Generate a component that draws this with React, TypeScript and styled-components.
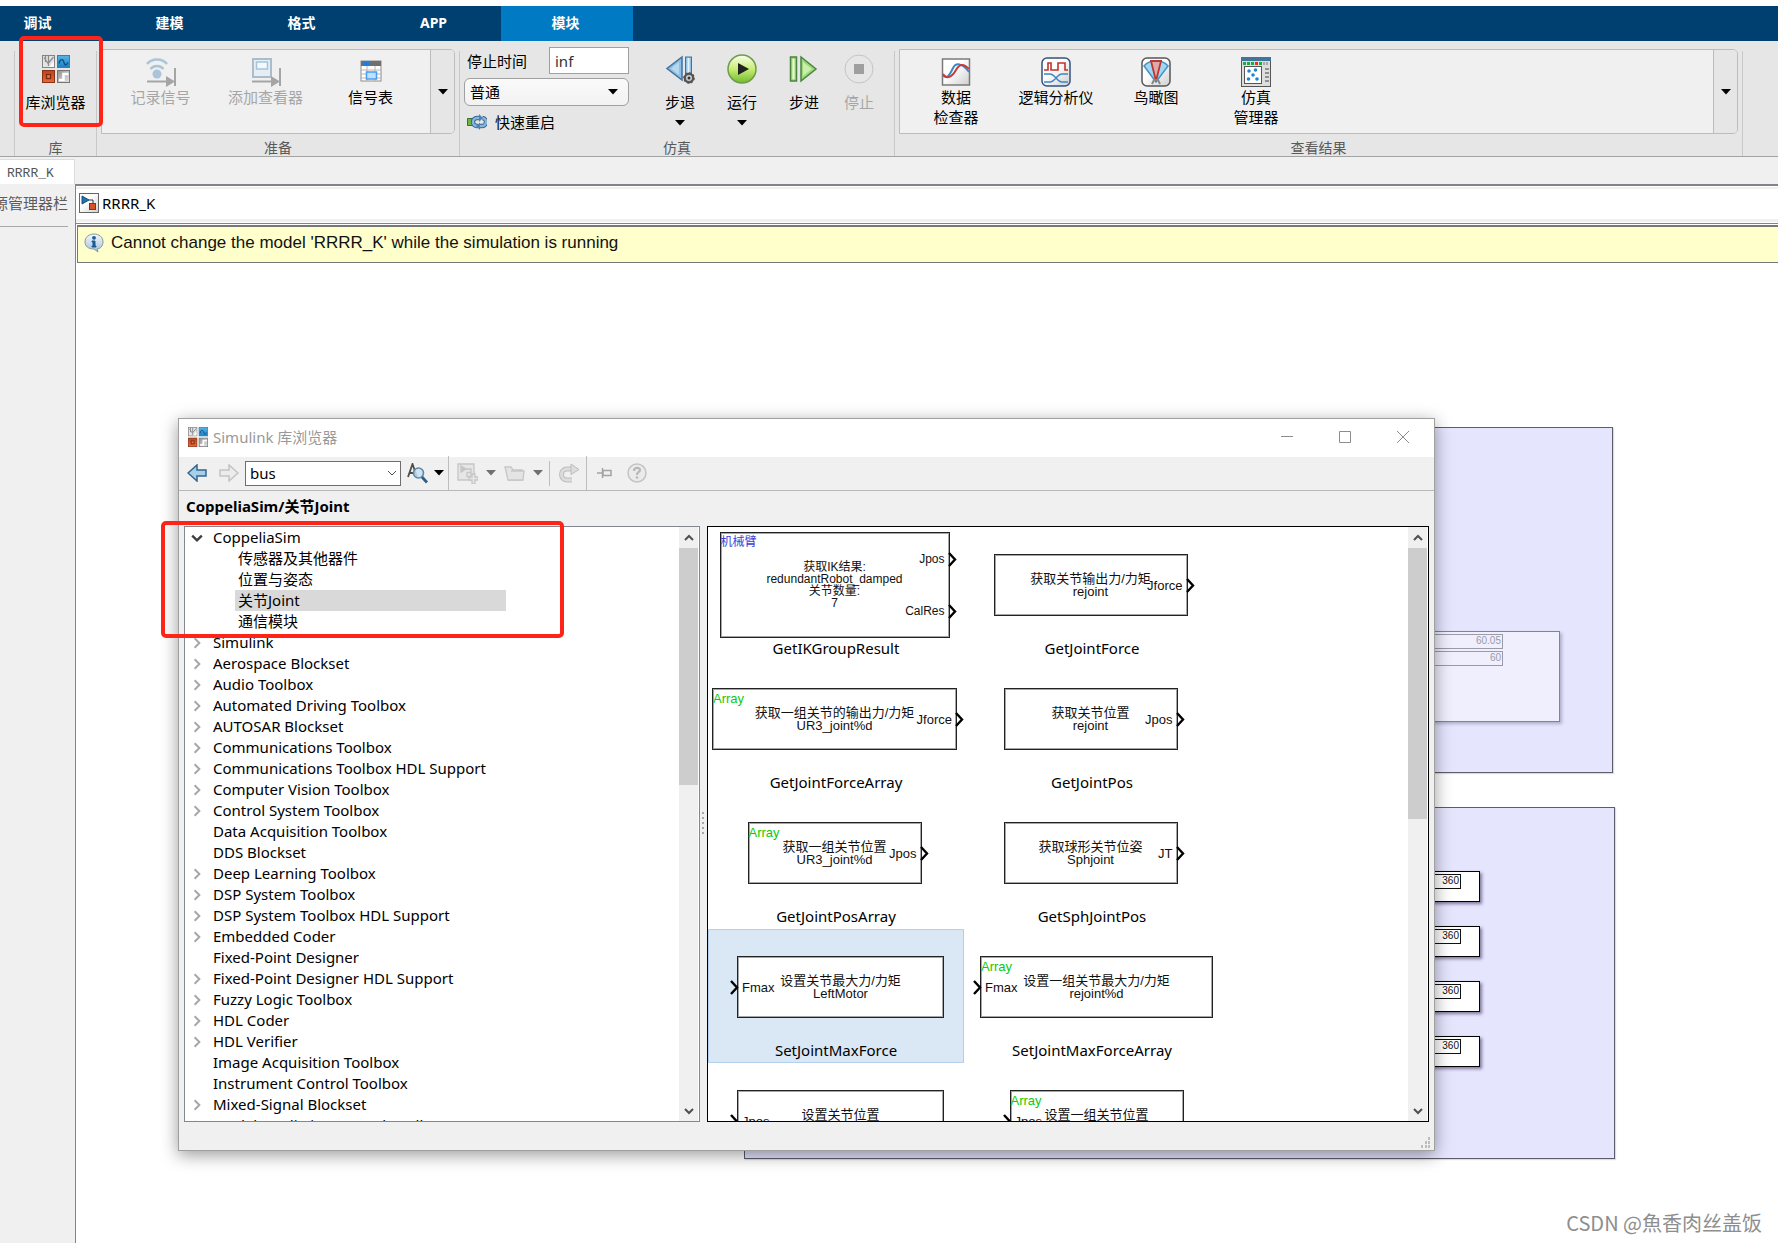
import React from "react";
import styled, { createGlobalStyle, css } from "styled-components";

const UI = '"Noto Sans", "Noto Sans CJK SC", sans-serif';
const DIAGRAM = '"Liberation Sans", "Noto Sans CJK SC", sans-serif';

const GlobalStyle = createGlobalStyle`
  *, *::before, *::after { box-sizing: border-box; }
  body { margin: 0; background: #fff; color: #000; font: 15px/20px ${UI}; }
  button, input, select { font: inherit; color: inherit; margin: 0; }
  button { border: 0; padding: 0; background: none; }
  ul { list-style: none; margin: 0; padding: 0; }
  svg { display: block; flex: none; }
  h1, h2, p { margin: 0; }
`;

const Page = styled.div`
  display: flex;
  flex-direction: column;
  min-height: 100vh;
  overflow: hidden;
`;

/* ---------- tab bar ---------- */

const TabBar = styled.nav`
  display: flex;
  margin-top: 6px;
  height: 35px;
  background: #004071;
`;
const TabList = styled.div`
  display: flex;
  margin-left: -27px;
`;
const TabButton = styled.button<{ $active?: boolean }>`
  width: 132px;
  color: #fff;
  font-size: 14px;
  font-weight: 700;
  line-height: 20px;
  padding: 0 3px 2px 0;
  background: ${(p) => (p.$active ? "#007ac2" : "transparent")};
`;

/* ---------- ribbon ---------- */

const Ribbon = styled.div`
  display: flex;
  height: 116px;
  padding: 0 35px 0 14px;
  background: #e6e6e6;
  border-bottom: 1px solid #a3a3a3;
`;
const Divider = styled.div`
  width: 1px;
  margin-top: 10px;
  background: #c8c8c8;
`;
const Section = styled.section<{ $width?: number }>`
  ${(p) => (p.$width ? `flex: 0 0 ${p.$width}px;` : "flex: 1;")}
  min-width: 0;
  position: relative;
  display: flex;
  flex-direction: column;
  justify-content: space-between;
  padding: 6px 4px 0;
`;
const SectionBody = styled.div`
  display: flex;
  justify-content: center;
`;
const SimBody = styled(SectionBody)`
  justify-content: flex-start;
`;
const SectionTitle = styled.h2`
  font-size: 14px;
  font-weight: 400;
  line-height: 16px;
  text-align: center;
  color: #5a5a5a;
`;
const Gallery = styled.div`
  flex: 1;
  display: flex;
  height: 85px;
  margin-top: 2px;
  background: #f0f0f0;
  border: 1px solid #bcbcbc;
  border-radius: 0 5px 5px 0;
`;
const GalleryItems = styled.div`
  flex: 1;
  display: flex;
  padding-left: 6px;
`;
const GalleryMore = styled.button`
  width: 24px;
  display: grid;
  place-items: center;
  background: #e6e6e6;
  border-left: 1px solid #bcbcbc;
  border-radius: 0 4px 4px 0;
`;
const ToolButton = styled.button<{ $width: number; $gallery?: boolean }>`
  width: ${(p) => p.$width}px;
  display: flex;
  flex-direction: column;
  align-items: center;
  align-self: flex-start;
  padding-top: 7px;
  gap: ${(p) => (p.$gallery ? 0 : 8)}px;
  line-height: 20px;
  white-space: pre-line;
  &:disabled { color: #a6a6a6; }
`;
const IconBox = styled.span`
  display: grid;
  place-items: center;
  width: 30px;
  height: 30px;
`;
/* Red marker frames drawn over the ribbon button and over the tree. */
const Marker = styled.div`
  position: absolute;
  border: 4px solid #ff2318;
  border-radius: 5px;
  pointer-events: none;
  z-index: 2;
`;
const ButtonMarker = styled(Marker)`
  inset: -5px -7px 29px 4px;
`;
const TreeMarker = styled(Marker)`
  left: -18px;
  top: -5px;
  width: 403px;
  height: 117px;
`;
const SimForm = styled.div`
  width: 165px;
  margin-right: 20px;
  display: flex;
  flex-direction: column;
`;
const StopTime = styled.div`
  display: flex;
  align-items: center;
  justify-content: space-between;
  padding-left: 3px;
  height: 27px;
  input {
    width: 80px;
    height: 27px;
    padding: 0 5px;
    border: 1px solid #a0a0a0;
    border-radius: 0;
    background: #fff;
    color: #333;
  }
`;
const ModePicker = styled.div`
  position: relative;
  margin-top: 4px;
  select {
    appearance: none;
    width: 100%;
    height: 28px;
    padding: 0 5px;
    border: 1px solid #a0a0a0;
    border-radius: 6px;
    background: linear-gradient(#fafafa, #f2f2f2);
  }
  svg {
    position: absolute;
    right: 11px;
    top: 11px;
    pointer-events: none;
  }
`;
const FastRestart = styled.button`
  display: flex;
  align-items: center;
  gap: 8px;
  padding-left: 3px;
  margin-top: 6px;
  height: 20px;
`;

/* ---------- document area ---------- */

const DocTabs = styled.div`
  height: 27px;
  padding-top: 2px;
  background: #f0f0f0;
`;
const DocTab = styled.button`
  display: block;
  width: 75px;
  height: 25px;
  padding: 4px 22px 0 7px;
  text-align: left;
  background: #fff;
  border: solid #dcdcdc;
  border-width: 1px 1px 0 0;
  color: #555;
  font: 13px/16px "Liberation Mono", monospace;
`;
const Workspace = styled.div`
  flex: 1;
  display: flex;
  background: #f0f0f0;
`;
const Side = styled.aside`
  flex: 0 0 75px;
  padding-right: 7px;
  overflow: hidden;
`;
const SideTitle = styled.h2`
  display: flex;
  justify-content: flex-end;
  height: 43px;
  padding-top: 9px;
  font-size: 15px;
  font-weight: 400;
  line-height: 20px;
  white-space: nowrap;
  color: #5c5c5c;
  border-bottom: 1px solid #a8a8a8;
`;
const Main = styled.main`
  flex: 1;
  min-width: 0;
  display: flex;
  flex-direction: column;
  border-left: 1px solid #83838c;
  background: #fff;
`;
const AddressBar = styled.div`
  height: 40px;
  padding: 1px 0;
  border-top: 2px solid #83838c;
  border-bottom: 1px solid #83838c;
`;
const Address = styled.div`
  display: flex;
  align-items: center;
  gap: 3px;
  height: 35px;
  padding: 0 0 2px 3px;
  border: solid #f0f0f0;
  border-width: 2px 0 3px;
`;
const Notice = styled.div`
  display: flex;
  align-items: center;
  gap: 7px;
  height: 38px;
  margin: 1px 0 0 1px;
  padding: 0 0 3px 6px;
  border: solid #777;
  border-width: 2px 0 1px 1px;
  background: #ffffcb;
  font: 17px/20px ${DIAGRAM};
  color: #111;
`;
const Canvas = styled.div`
  position: relative;
  flex: 1;
  min-height: 940px;
  overflow: hidden;
`;

/* Nodes on the model canvas sit at their diagram coordinates. */
type Rect = { $x: number; $y: number; $w: number; $h: number };
const place = css<Rect>`
  position: absolute;
  left: ${(p) => p.$x}px;
  top: ${(p) => p.$y}px;
  width: ${(p) => p.$w}px;
  height: ${(p) => p.$h}px;
`;
const Area = styled.div<Rect>`
  ${place}
  background: #e5e5fe;
  border: 1px solid #5c5c6c;
  box-shadow: 1px 1px 1px #ddd;
`;
const DisplayBlock = styled.div<Rect & { $muted?: boolean }>`
  ${place}
  display: flex;
  flex-direction: column;
  gap: 2px;
  padding: 2px ${(p) => (p.$muted ? 56 : 18)}px 0 0;
  border: 1px solid ${(p) => (p.$muted ? "#838392" : "#000")};
  background: ${(p) => (p.$muted ? "#f0effe" : "#fff")};
  color: ${(p) => (p.$muted ? "#9a9aa8" : "#111")};
  box-shadow: 2px 2px 3px rgba(60, 50, 90, ${(p) => (p.$muted ? 0.3 : 0.6)});
`;
const Readout = styled.output`
  height: 15px;
  padding-right: 1px;
  border: 1px solid currentColor;
  text-align: right;
  font: 10px/12px ${DIAGRAM};
`;
const Watermark = styled.p`
  position: absolute;
  right: 16px;
  bottom: 5px;
  font: 20px/30px "Noto Sans CJK SC", sans-serif;
  color: #8e8e8e;
`;

/* ---------- library browser window ---------- */

const Window = styled.section`
  position: absolute;
  left: 102px;
  top: 155px;
  width: 1257px;
  display: flex;
  flex-direction: column;
  background: #f0f0f0;
  border: 1px solid #a0a0a0;
  box-shadow: 0 4px 16px rgba(0, 0, 0, 0.4);
`;
const TitleBar = styled.header`
  display: flex;
  align-items: center;
  height: 38px;
  padding: 0 2px 2px 9px;
  gap: 5px;
  background: #fff;
  h1 {
    flex: 1;
    font-size: 15px;
    font-weight: 400;
    color: #999;
  }
`;
const WindowControls = styled.div`
  display: flex;
  color: #8c8c8c;
  button {
    width: 58px;
    height: 36px;
    display: grid;
    place-items: center;
  }
`;
const ToolBar = styled.div`
  display: flex;
  align-items: center;
  height: 34px;
  padding-bottom: 1px;
  border-bottom: 1px solid #b8b8b8;
`;
const ToolGroup = styled.div<{ $pad: string; $gap: number }>`
  display: flex;
  align-items: center;
  align-self: stretch;
  gap: ${(p) => p.$gap}px;
  padding: ${(p) => p.$pad};
`;
const ToolSplit = styled.div<{ $short?: boolean }>`
  width: 1px;
  height: ${(p) => (p.$short ? 25 : 34)}px;
  background: #bdbdbd;
`;
const SearchBox = styled.div`
  display: flex;
  align-items: center;
  width: 156px;
  height: 25px;
  border: 1px solid #6e6e6e;
  background: #fff;
  input {
    flex: 1;
    min-width: 0;
    height: 23px;
    padding: 0 4px;
    border: 0;
    background: none;
    outline: none;
  }
  button { padding: 0 3px; }
`;
const PathTitle = styled.h2`
  height: 35px;
  padding: 5px 7px 0;
  font-size: 15px;
  font-weight: 700;
  line-height: 20px;
`;
const Panes = styled.div`
  position: relative;
  display: flex;
  height: 596px;
  padding: 0 5px;
`;
const TreePane = styled.div`
  flex: 0 0 516px;
  display: flex;
  overflow: hidden;
  border: 1px solid #828790;
  background: #fff;
  padding-right: 1px;
`;
const Tree = styled.ul`
  flex: 1;
`;
const TreeItem = styled.li`
  display: flex;
  height: 21px;
  align-items: center;
`;
const Toggle = styled.button`
  width: 24px;
  height: 21px;
  display: grid;
  place-items: center;
`;
const TreeLabel = styled.button<{ $child?: boolean; $selected?: boolean }>`
  height: 21px;
  padding: 0 3px 2px;
  text-align: left;
  white-space: nowrap;
  margin-left: ${(p) => (p.$child ? 50 : 25)}px;
  width: ${(p) => (p.$child ? 271 : 340)}px;
  background: ${(p) => (p.$selected ? "#d9d9d9" : "transparent")};
  ${Toggle} + & { margin-left: 1px; }
`;
const Splitter = styled.div`
  flex: 0 0 7px;
  display: grid;
  place-items: center;
`;
const BlockPane = styled.div`
  flex: 1;
  display: flex;
  overflow: hidden;
  border: 1px solid #000;
  background: #fff;
  padding-right: 1px;
`;
const BlockGrid = styled.div`
  flex: 1;
  display: grid;
  grid-template-columns: repeat(2, 256px);
  grid-auto-rows: 134px;
`;
const Cell = styled.figure<{ $selected?: boolean }>`
  margin: 0;
  display: flex;
  flex-direction: column;
  border: 1px solid ${(p) => (p.$selected ? "#b3cfee" : "transparent")};
  background: ${(p) => (p.$selected ? "#dae7f4" : "transparent")};
  padding-top: 4px;
  figcaption {
    text-align: center;
    line-height: 20px;
  }
`;
const BlockSlot = styled.div<{ $input?: boolean }>`
  height: 106px;
  display: flex;
  align-items: center;
  justify-content: center;
  padding: ${(p) => (p.$input ? "0 0 0 9px" : "0 3px 0 0")};
`;
const Block = styled.div<{ $w: number; $tall: boolean }>`
  position: relative;
  flex: none;
  display: grid;
  place-content: center;
  width: ${(p) => p.$w}px;
  height: ${(p) => (p.$tall ? 106 : 62)}px;
  border: 1px solid #222;
  outline: 1px solid rgba(0, 0, 0, 0.35);
  outline-offset: -2px;
  background: #fff;
  text-align: center;
  white-space: pre-line;
  color: #111;
  font: ${(p) => (p.$tall ? "12px/12px" : "13px/13px")} ${DIAGRAM};
`;
const Corner = styled.span<{ $color: string }>`
  position: absolute;
  left: 0;
  top: 3px;
  color: ${(p) => p.$color};
`;
const Ports = styled.div<{ $input?: boolean }>`
  position: absolute;
  top: 0;
  bottom: 0;
  ${(p) => (p.$input ? "left: -8px;" : "right: -8px;")}
  display: flex;
  flex-direction: column;
  justify-content: space-around;
`;
const Port = styled.div`
  display: flex;
  align-items: center;
  justify-content: flex-end;
  gap: 3px;
`;

const ScrollTrack = styled.div`
  width: 19px;
  display: flex;
  flex-direction: column;
  background: #f0f0f0;
  button {
    height: 21px;
    display: grid;
    place-items: center;
  }
`;
const ScrollThumb = styled.div<{ $h: number }>`
  height: ${(p) => p.$h}px;
  margin-bottom: auto;
  background: #cdcdcd;
`;
const StatusBar = styled.footer`
  display: flex;
  justify-content: flex-end;
  align-items: flex-end;
  height: 28px;
  padding: 0 3px 2px 0;
`;

/* ---------- icons ---------- */

const Caret = ({ color = "#000" }: { color?: string }) => (
  <svg width="10" height="6" viewBox="0 0 10 6" fill={color}><path d="M0 0h10L5 5.5z" /></svg>
);
const Chevron = ({ dir, color = "#505050", size = 10, w = 2 }: { dir: "up" | "down" | "right"; color?: string; size?: number; w?: number }) => (
  <svg width={size} height={size} viewBox="0 0 10 10" fill="none" stroke={color} strokeWidth={w}>
    <path d={dir === "up" ? "M1 7l4-4 4 4" : dir === "down" ? "M1 3l4 4 4-4" : "M3 1l4 4-4 4"} />
  </svg>
);
const LibraryIcon = ({ size }: { size: number }) => (
  <svg width={size} height={size} viewBox="0 0 28 28">
    <defs>
      <linearGradient id="tileGrey" x1="0" y1="0" x2="1" y2="1"><stop stopColor="#8f8f8f" /><stop offset="1" stopColor="#e6e6e6" /></linearGradient>
      <linearGradient id="tileBlue" x1="0" y1="0" x2="0" y2="1"><stop stopColor="#58b4e6" /><stop offset="1" stopColor="#1a80c4" /></linearGradient>
      <linearGradient id="tileRed" x1="0" y1="0" x2="0" y2="1"><stop stopColor="#b9441c" /><stop offset="1" stopColor="#e8683a" /></linearGradient>
    </defs>
    <rect x=".5" y=".5" width="12" height="12" fill="#e4e4e4" stroke="#848484" />
    <path d="M3.500 1v6M6.500 1v10M6.500 8l5-6M2 2.500l4 6" fill="none" stroke="#8c8c8c" strokeWidth="1.300" />
    <path d="M8 11l4-5v6H8z" fill="#fafafa" />
    <rect x="15.500" y=".5" width="12" height="12" fill="url(#tileBlue)" stroke="#3a7ea9" />
    <path d="M17 8.500c1-5 4-5 5-1s3 2 4 0" fill="none" stroke="#0d4c80" strokeWidth="1.300" />
    <rect x=".5" y="15.500" width="12" height="12" fill="url(#tileRed)" stroke="#8b3216" />
    <rect x="4.500" y="19.500" width="4" height="4" fill="#e97a45" stroke="#7d2a10" strokeWidth="1.300" />
    <rect x="15.500" y="15.500" width="12" height="12" fill="url(#tileGrey)" stroke="#777" />
    <path d="M17 25h4.500v-6h5" fill="none" stroke="#fff" strokeWidth="2.600" />
  </svg>
);
const LogSignalIcon = () => (
  <svg width="30" height="30" viewBox="0 0 30 30" fill="none">
    <path d="M1 7c5-6 15-6 20 0" stroke="#a9c6d6" strokeWidth="2.600" />
    <path d="M4.500 12c3.500-4 9.500-4 13 0" stroke="#a9c6d6" strokeWidth="2.600" />
    <circle cx="11" cy="17" r="4.500" fill="#aac4dc" />
    <path d="M1 24.500h22M29 11v18" stroke="#a5a5a5" strokeWidth="2" />
    <path d="M20 19l9 5.500-9 5.500z" fill="#a5a5a5" />
  </svg>
);
const ViewerIcon = () => (
  <svg width="30" height="30" viewBox="0 0 30 30" fill="none">
    <rect x="2" y="2" width="18" height="18" fill="#e6eef4" stroke="#a9bdcb" strokeWidth="2" />
    <rect x="5.500" y="5" width="11" height="7" fill="#f4f8fb" stroke="#a4c4dc" strokeWidth="1.500" />
    <path d="M1 24.500h22M29 11v18" stroke="#a5a5a5" strokeWidth="2" />
    <path d="M20 19l9 5.500-9 5.500z" fill="#a5a5a5" />
  </svg>
);
const SignalTableIcon = () => (
  <svg width="30" height="30" viewBox="0 0 30 30" fill="none">
    <rect x="5" y="4" width="20" height="20" fill="#fff" stroke="#8c8c8c" />
    <path d="M5 4h20v5H5z" fill="#6f6f6f" /><path d="M8 5h5v3H8z" fill="#1c7de0" />
    <path d="M5 13h20M5 17h20M5 21h20M11 9v15M19 9v15" stroke="#b5b5b5" />
    <rect x="10.500" y="15" width="10" height="7" fill="#bfe0ff" stroke="#4b9cee" strokeWidth="1.500" />
  </svg>
);
const StepBackIcon = () => (
  <svg width="30" height="30" viewBox="0 0 30 30">
    <path d="M17 3v23L2 14.500z" fill="#8fbfe4" stroke="#44729c" strokeWidth="1.500" />
    <path d="M14 8v13l-8-6.500z" fill="#b5d8f1" />
    <rect x="20.500" y="3" width="6" height="20" fill="#8fc0e6" stroke="#44729c" /><path d="M23.500 4v18" stroke="#e3f3fd" strokeWidth="2" />
    <circle cx="24" cy="24" r="4.200" fill="#d2d2d2" stroke="#555" strokeWidth="2.400" /><circle cx="24" cy="24" r="5.200" fill="none" stroke="#555" strokeWidth="1.200" strokeDasharray="2 2" /><circle cx="24" cy="24" r="1.500" fill="#333" />
  </svg>
);
const RunIcon = () => (
  <svg width="30" height="30" viewBox="0 0 30 30">
    <defs><linearGradient id="run" x1="0" y1="0" x2="0" y2="1"><stop stopColor="#fbfdf0" /><stop offset=".5" stopColor="#c7ee74" /><stop offset="1" stopColor="#72bb2f" /></linearGradient></defs>
    <circle cx="15" cy="15" r="14" fill="url(#run)" stroke="#6f9c4c" strokeWidth="1.500" />
    <path d="M11 9l11 6-11 6z" fill="#222" />
  </svg>
);
const StepForwardIcon = () => (
  <svg width="30" height="30" viewBox="0 0 30 30">
    <rect x="1.500" y="3" width="6" height="24" fill="#a5dc7c" stroke="#4b8440" strokeWidth="1.500" /><path d="M4.500 5v20" stroke="#eafbd9" strokeWidth="2" />
    <path d="M12 3v24l15-12z" fill="#9bd97a" stroke="#4b8440" strokeWidth="1.500" /><path d="M14 8v14l9-7z" fill="#c9efa8" />
  </svg>
);
const StopIcon = () => (
  <svg width="30" height="30" viewBox="0 0 30 30">
    <defs><linearGradient id="stop" x1="0" y1="0" x2="0" y2="1"><stop stopColor="#f3f3f3" /><stop offset="1" stopColor="#d2d2d2" /></linearGradient></defs>
    <circle cx="15" cy="15" r="14" fill="url(#stop)" stroke="#c4c4c4" /><path d="M10 10h10v10H10z" fill="#9f9f9f" />
  </svg>
);
const RestartIcon = () => (
  <svg width="20" height="16" viewBox="0 0 20 16" fill="none">
    <path d="M.5 4.500h6v7h-6z" fill="#6bb83c" stroke="#3d6d35" />
    <path d="M13 4H10a3.800 3.800 0 000 8h1M12 12h2.500a3.800 3.800 0 001-8" stroke="#3a6790" strokeWidth="4.400" />
    <path d="M13 4H10a3.800 3.800 0 000 8h1M12 12h2.500a3.800 3.800 0 001-8" stroke="#86b7dc" strokeWidth="2.400" />
    <path d="M12 0l4 4-4 4zM13 8.500l-4 3.500 4 4z" fill="#4d84b4" />
  </svg>
);
const InspectorIcon = () => (
  <svg width="30" height="30" viewBox="0 0 30 30" fill="none">
    <defs><linearGradient id="pane" x1="0" y1="0" x2="1" y2="1"><stop offset=".4" stopColor="#fff" /><stop offset="1" stopColor="#cfcfcf" /></linearGradient></defs>
    <rect x="1.500" y="2" width="27" height="26" fill="url(#pane)" stroke="#7a7a7a" strokeWidth="1.500" />
    <path d="M2 19c5 3 7-2 10-8s9-5 16 4" stroke="#3d87c8" strokeWidth="2" />
    <path d="M2 17c4 6 9 3 13-4s8-6 13-1" stroke="#c93a36" strokeWidth="2" />
  </svg>
);
const LogicIcon = () => (
  <svg width="30" height="30" viewBox="0 0 30 30" fill="none">
    <rect x="1" y="1" width="28" height="28" rx="5" fill="url(#pane)" stroke="#33527c" strokeWidth="1.500" />
    <path d="M3 13h4V6h3v7h7V6h7v7h3" stroke="#c4302b" strokeWidth="1.600" />
    <path d="M3 17h6c5 0 7 8 12 8h6M3 25h6c5 0 7-8 12-8h6" stroke="#3b86c6" strokeWidth="1.600" />
  </svg>
);
const BirdIcon = () => (
  <svg width="30" height="30" viewBox="0 0 30 30" fill="none">
    <rect x="1" y="1" width="28" height="28" rx="5" fill="url(#pane)" stroke="#555" strokeWidth="1.500" />
    <path d="M15 25L3 9c6-7 18-7 24 0z" fill="#9fd7f5" stroke="#4592c4" strokeWidth="1.500" />
    <path d="M15 24L10 4h10z" fill="#e0a9a6" stroke="#b83832" strokeWidth="1.800" />
    <path d="M11 27l2-4h4l2 4" stroke="#888" strokeWidth="2" />
  </svg>
);
const ManagerIcon = () => (
  <svg width="30" height="30" viewBox="0 0 30 30" fill="none">
    <rect x=".5" y=".5" width="29" height="29" fill="#dedede" stroke="#555" /><path d="M0 0h30v4H0z" fill="#41749b" />
    <path d="M2 6.500h19" stroke="#10b43c" strokeWidth="3" strokeDasharray="3 1" /><path d="M14 5h3v3h-3z" fill="#e8331c" /><path d="M22 6.500h6" stroke="#a8a8a8" strokeWidth="3" strokeDasharray="2 1" />
    <rect x="3.500" y="9.500" width="17" height="17" fill="#fff" stroke="#555" />
    <path d="M24 12h4M24 16h4M24 20h4M24 24h4" stroke="#777" strokeWidth="1.500" />
    <g fill="#1e86d0"><circle cx="8" cy="14" r="1.800" /><circle cx="14.500" cy="13" r="1.800" /><circle cx="12" cy="18" r="1.800" /><circle cx="7.500" cy="22" r="1.800" /><circle cx="16" cy="22" r="1.800" /></g>
  </svg>
);
const ModelIcon = () => (
  <svg width="20" height="20" viewBox="0 0 20 20" fill="none">
    <rect x=".5" y=".5" width="19" height="19" fill="url(#pane)" stroke="#666" />
    <path d="M3 3l7 4-7 4z" fill="#2474ac" stroke="#184c76" /><path d="M10 7h4v4" stroke="#333" />
    <rect x="10.500" y="10.500" width="6" height="6" fill="#d4532a" stroke="#8b3216" />
  </svg>
);
const InfoIcon = () => (
  <svg width="20" height="20" viewBox="0 0 20 20">
    <defs><linearGradient id="info" x1="0" y1="0" x2="0" y2="1"><stop stopColor="#f4f8fb" /><stop offset="1" stopColor="#a3c0d8" /></linearGradient></defs>
    <path d="M10 1c5 0 9 3 9 8 0 4-3 7-6 7l1 3-4-3c-6 0-9-3-9-7 0-5 4-8 9-8z" fill="url(#info)" stroke="#8296a5" />
    <circle cx="10" cy="4.800" r="1.900" fill="#1d5a96" /><path d="M8 8h3v5h1v1H8v-1h1V9H8z" fill="#1d5a96" stroke="#1d5a96" />
  </svg>
);
const ArrowIcon = ({ back }: { back?: boolean }) => (
  <svg width="20" height="18" viewBox="0 0 20 18">
    <path d={back ? "M1 9l9-8v5h9v6h-9v5z" : "M19 9l-9-8v5H1v6h9v5z"} fill={back ? "#a6cfe9" : "#ececec"} stroke={back ? "#34658c" : "#c3c3c3"} strokeWidth="1.500" />
  </svg>
);
const FindIcon = () => (
  <svg width="21" height="21" viewBox="0 0 21 21" fill="none">
    <path d="M1 14L5.500 1 10 14M2.500 10h6" stroke="#4c4c4c" strokeWidth="1.800" />
    <circle cx="11.500" cy="10" r="5" fill="#c5e2f4" fillOpacity=".85" stroke="#5f87a4" strokeWidth="1.600" />
    <path d="M15 14l5 5.500" stroke="#2d5f89" strokeWidth="2.800" />
  </svg>
);
const NewLibraryIcon = () => (
  <svg width="21" height="21" viewBox="0 0 21 21" fill="#e6e6e6" stroke="#c6c6c6" strokeWidth="1.300">
    <path d="M1 1h16v16H1z" /><path d="M4 3l5 3-5 3z" fill="#c6c6c6" /><path d="M9 6h5v3M10 9.500h4v4h-4z" fill="none" /><path d="M12 14h3v-3h3v3h3v3h-3v4h-3v-4h-3z" />
  </svg>
);
const FolderIcon = () => (
  <svg width="21" height="15" viewBox="0 0 21 15" fill="#e4e4e4" stroke="#c6c6c6" strokeWidth="1.300">
    <path d="M1 1h6l2 3h9v10H4z" /><path d="M7 5h13l-1 9H4" />
  </svg>
);
const RedoIcon = () => (
  <svg width="22" height="20" viewBox="0 0 22 20" fill="none">
    <path d="M14 6H9a5 5 0 000 11h5" stroke="#bdbdbd" strokeWidth="5" /><path d="M14 6H9a5 5 0 000 11h5" stroke="#dcdcdc" strokeWidth="3" />
    <path d="M13 1l8 5.500-8 5z" fill="#dcdcdc" stroke="#bdbdbd" />
  </svg>
);
const PinIcon = () => (
  <svg width="15" height="10" viewBox="0 0 15 10" fill="none" stroke="#a2a2a2" strokeWidth="1.500"><path d="M0 5h5M5.500 0v10M6 2.500h8v5H6z" /></svg>
);
const HelpIcon = () => (
  <svg width="20" height="20" viewBox="0 0 20 20" fill="none">
    <circle cx="10" cy="10" r="9" fill="#ebebeb" stroke="#c4c4c4" strokeWidth="1.500" />
    <path d="M7 8c0-4 6-4 6-1 0 2-3 2-3 5" stroke="#b8b8b8" strokeWidth="2.200" /><circle cx="10" cy="14.500" r="1.300" fill="#b8b8b8" />
  </svg>
);
const PortArrow = () => (
  <svg width="9" height="15" viewBox="0 0 9 15" fill="none" stroke="#000" strokeWidth="2.400"><path d="M1 1l6 6.500L1 14" /></svg>
);

/* ---------- data ---------- */

const tabs = ["调试", "建模", "格式", "APP", "模块"];

type Node = { name: string; state?: "open" | "closed"; child?: boolean };
const tree: Node[] = [
  { name: "CoppeliaSim", state: "open" },
  ...["传感器及其他器件", "位置与姿态", "关节Joint", "通信模块"].map((name) => ({ name, child: true })),
  ...[
    "+Simulink", "+Aerospace Blockset", "+Audio Toolbox", "+Automated Driving Toolbox", "+AUTOSAR Blockset",
    "+Communications Toolbox", "+Communications Toolbox HDL Support", "+Computer Vision Toolbox", "+Control System Toolbox",
    "Data Acquisition Toolbox", "DDS Blockset", "+Deep Learning Toolbox", "+DSP System Toolbox",
    "+DSP System Toolbox HDL Support", "+Embedded Coder", "Fixed-Point Designer", "+Fixed-Point Designer HDL Support",
    "+Fuzzy Logic Toolbox", "+HDL Coder", "+HDL Verifier", "Image Acquisition Toolbox", "Instrument Control Toolbox",
    "+Mixed-Signal Blockset", "+Model Predictive Control Toolbox",
  ].map((s): Node => (s[0] === "+" ? { name: s.slice(1), state: "closed" } : { name: s })),
];

type BlockSpec = { name: string; text: string; w: number; out?: string[]; in?: string[]; array?: boolean; arm?: boolean };
const blocks: BlockSpec[] = [
  { name: "GetIKGroupResult", text: "获取IK结果:\nredundantRobot_damped\n关节数量:\n7", w: 230, out: ["Jpos", "CalRes"], arm: true },
  { name: "GetJointForce", text: "获取关节输出力/力矩\nrejoint", w: 194, out: ["Jforce"] },
  { name: "GetJointForceArray", text: "获取一组关节的输出力/力矩\nUR3_joint%d", w: 245, out: ["Jforce"], array: true },
  { name: "GetJointPos", text: "获取关节位置\nrejoint", w: 174, out: ["Jpos"] },
  { name: "GetJointPosArray", text: "获取一组关节位置\nUR3_joint%d", w: 174, out: ["Jpos"], array: true },
  { name: "GetSphJointPos", text: "获取球形关节位姿\nSphjoint", w: 174, out: ["JT"] },
  { name: "SetJointMaxForce", text: "设置关节最大力/力矩\nLeftMotor", w: 207, in: ["Fmax"] },
  { name: "SetJointMaxForceArray", text: "设置一组关节最大力/力矩\nrejoint%d", w: 233, in: ["Fmax"], array: true },
  { name: "SetJointPos", text: "设置关节位置\nrejoint", w: 207, in: ["Jpos"] },
  { name: "SetJointPosArray", text: "设置一组关节位置\nrejoint%d", w: 174, in: ["Jpos"], array: true },
];

const Scroll = ({ thumb }: { thumb: number }) => (
  <ScrollTrack>
    <button aria-label="向上滚动"><Chevron dir="up" /></button>
    <ScrollThumb $h={thumb} />
    <button aria-label="向下滚动"><Chevron dir="down" /></button>
  </ScrollTrack>
);

const LibraryBrowser = () => (
  <Window>
    <TitleBar>
      <LibraryIcon size={20} />
      <h1>Simulink 库浏览器</h1>
      <WindowControls>
        <button aria-label="最小化"><svg width="12" height="12" stroke="currentColor"><path d="M0 5.500h12" /></svg></button>
        <button aria-label="最大化"><svg width="12" height="12" fill="none" stroke="currentColor"><path d="M.5.5h11v11H.5z" /></svg></button>
        <button aria-label="关闭"><svg width="12" height="12" stroke="currentColor"><path d="M0 0l12 12M12 0L0 12" /></svg></button>
      </WindowControls>
    </TitleBar>
    <ToolBar>
      <ToolGroup $pad="0 4px 0 8px" $gap={6}>
        <ToolGroup $pad="0" $gap={12}>
          <button aria-label="后退"><ArrowIcon back /></button>
          <button aria-label="前进"><ArrowIcon /></button>
        </ToolGroup>
        <SearchBox>
          <input aria-label="搜索" defaultValue="bus" />
          <button aria-label="历史记录"><Chevron dir="down" w={1} /></button>
        </SearchBox>
        <button aria-label="查找"><FindIcon /></button>
        <button aria-label="查找选项"><Caret /></button>
      </ToolGroup>
      <ToolSplit />
      <ToolGroup $pad="0 6px 0 8px" $gap={8}>
        <button aria-label="新建库"><NewLibraryIcon /></button>
        <button aria-label="新建选项"><Caret color="#707070" /></button>
        <button aria-label="打开"><FolderIcon /></button>
        <button aria-label="打开选项"><Caret color="#707070" /></button>
      </ToolGroup>
      <ToolSplit $short />
      <ToolGroup $pad="0 6px 0 8px" $gap={8}>
        <button aria-label="刷新"><RedoIcon /></button>
      </ToolGroup>
      <ToolSplit />
      <ToolGroup $pad="0 0 0 10px" $gap={15}>
        <button aria-label="置顶"><PinIcon /></button>
        <button aria-label="帮助"><HelpIcon /></button>
      </ToolGroup>
    </ToolBar>
    <PathTitle>CoppeliaSim/关节Joint</PathTitle>
    <Panes>
      <TreePane>
        <Tree>
          {tree.map((n) => (
            <TreeItem key={n.name}>
              {n.state && (
                <Toggle aria-label={"展开 " + n.name}>
                  <Chevron dir={n.state === "open" ? "down" : "right"} color={n.state === "open" ? "#404040" : "#a6a6a6"} size={12} w={n.state === "open" ? 2 : 1.6} />
                </Toggle>
              )}
              <TreeLabel $child={n.child} $selected={n.name === "关节Joint"}>{n.name}</TreeLabel>
            </TreeItem>
          ))}
        </Tree>
        <Scroll thumb={237} />
      </TreePane>
      <Splitter>
        <svg width="3" height="24" fill="#a9a9a9">{[0, 5, 10, 15, 20].map((y) => <rect key={y} y={y} width="2" height="2" />)}</svg>
      </Splitter>
      <BlockPane>
        <BlockGrid>
          {blocks.map((b) => (
            <Cell key={b.name} $selected={b.name === "SetJointMaxForce"}>
              <BlockSlot $input={!!b.in}>
                <Block $w={b.w} $tall={!!b.arm}>
                  {b.text}
                  {b.arm && <Corner $color="#3b3bdc">机械臂</Corner>}
                  {b.array && <Corner $color="#0acb0a">Array</Corner>}
                  <Ports $input={!!b.in}>
                    {b.in?.map((p) => <Port key={p}><PortArrow />{p}</Port>)}
                    {b.out?.map((p) => <Port key={p}>{p}<PortArrow /></Port>)}
                  </Ports>
                </Block>
              </BlockSlot>
              <figcaption>{b.name}</figcaption>
            </Cell>
          ))}
        </BlockGrid>
        <Scroll thumb={271} />
      </BlockPane>
      <TreeMarker />
    </Panes>
    <StatusBar>
      <svg width="10" height="11" fill="#bdbdbd">
        {[[7, 0], [4, 4], [7, 4], [0, 8], [4, 8], [7, 8]].map(([x, y]) => <rect key={`${x}-${y}`} x={x} y={y} width="2" height="3" />)}
      </svg>
    </StatusBar>
  </Window>
);

export default function App() {
  return (
    <Page>
      <GlobalStyle />
      <TabBar>
        <TabList>
          {tabs.map((t) => <TabButton key={t} $active={t === "模块"}>{t}</TabButton>)}
        </TabList>
      </TabBar>

      <Ribbon>
        <Divider />
        <Section $width={81}>
          <SectionBody>
            <ToolButton $width={73}><IconBox><LibraryIcon size={28} /></IconBox>库浏览器</ToolButton>
          </SectionBody>
          <SectionTitle>库</SectionTitle>
          <ButtonMarker />
        </Section>
        <Divider />
        <Section $width={362}>
          <SectionBody>
            <Gallery>
              <GalleryItems>
                <ToolButton $width={105} $gallery disabled><LogSignalIcon />记录信号</ToolButton>
                <ToolButton $width={105} $gallery disabled><ViewerIcon />添加查看器</ToolButton>
                <ToolButton $width={105} $gallery><SignalTableIcon />信号表</ToolButton>
              </GalleryItems>
              <GalleryMore aria-label="更多"><Caret /></GalleryMore>
            </Gallery>
          </SectionBody>
          <SectionTitle>准备</SectionTitle>
        </Section>
        <Divider />
        <Section $width={434}>
          <SimBody>
            <SimForm>
              <StopTime>
                <label htmlFor="stop">停止时间</label>
                <input id="stop" defaultValue="inf" />
              </StopTime>
              <ModePicker>
                <select aria-label="仿真模式"><option>普通</option></select>
                <Caret />
              </ModePicker>
              <FastRestart><RestartIcon />快速重启</FastRestart>
            </SimForm>
            <ToolButton $width={62}><StepBackIcon />步退<Caret /></ToolButton>
            <ToolButton $width={62}><RunIcon />运行<Caret /></ToolButton>
            <ToolButton $width={62}><StepForwardIcon />步进</ToolButton>
            <ToolButton $width={48} disabled><StopIcon />停止</ToolButton>
          </SimBody>
          <SectionTitle>仿真</SectionTitle>
        </Section>
        <Divider />
        <Section>
          <SectionBody>
            <Gallery>
              <GalleryItems>
                <ToolButton $width={100} $gallery><InspectorIcon />{"数据\n检查器"}</ToolButton>
                <ToolButton $width={100} $gallery><LogicIcon />逻辑分析仪</ToolButton>
                <ToolButton $width={100} $gallery><BirdIcon />鸟瞰图</ToolButton>
                <ToolButton $width={100} $gallery><ManagerIcon />{"仿真\n管理器"}</ToolButton>
              </GalleryItems>
              <GalleryMore aria-label="更多"><Caret /></GalleryMore>
            </Gallery>
          </SectionBody>
          <SectionTitle>查看结果</SectionTitle>
        </Section>
        <Divider />
      </Ribbon>

      <DocTabs><DocTab>RRRR_K</DocTab></DocTabs>

      <Workspace>
        <Side><SideTitle>源管理器栏</SideTitle></Side>
        <Main>
          <AddressBar><Address><ModelIcon />RRRR_K</Address></AddressBar>
          <Notice role="status"><InfoIcon />Cannot change the model 'RRRR_K' while the simulation is running</Notice>
          <Canvas>
            <Area $x={668} $y={164} $w={869} $h={346} />
            <DisplayBlock $muted $x={1200} $y={368} $w={284} $h={91}>
              <Readout>60.05</Readout>
              <Readout>60</Readout>
            </DisplayBlock>
            <Area $x={668} $y={544} $w={871} $h={352} />
            {[0, 1, 2, 3].map((i) => (
              <DisplayBlock key={i} $x={1300} $y={608 + i * 55} $w={104} $h={31}><Readout>360</Readout></DisplayBlock>
            ))}
            <LibraryBrowser />
            <Watermark>CSDN @魚香肉丝盖饭</Watermark>
          </Canvas>
        </Main>
      </Workspace>
    </Page>
  );
}
